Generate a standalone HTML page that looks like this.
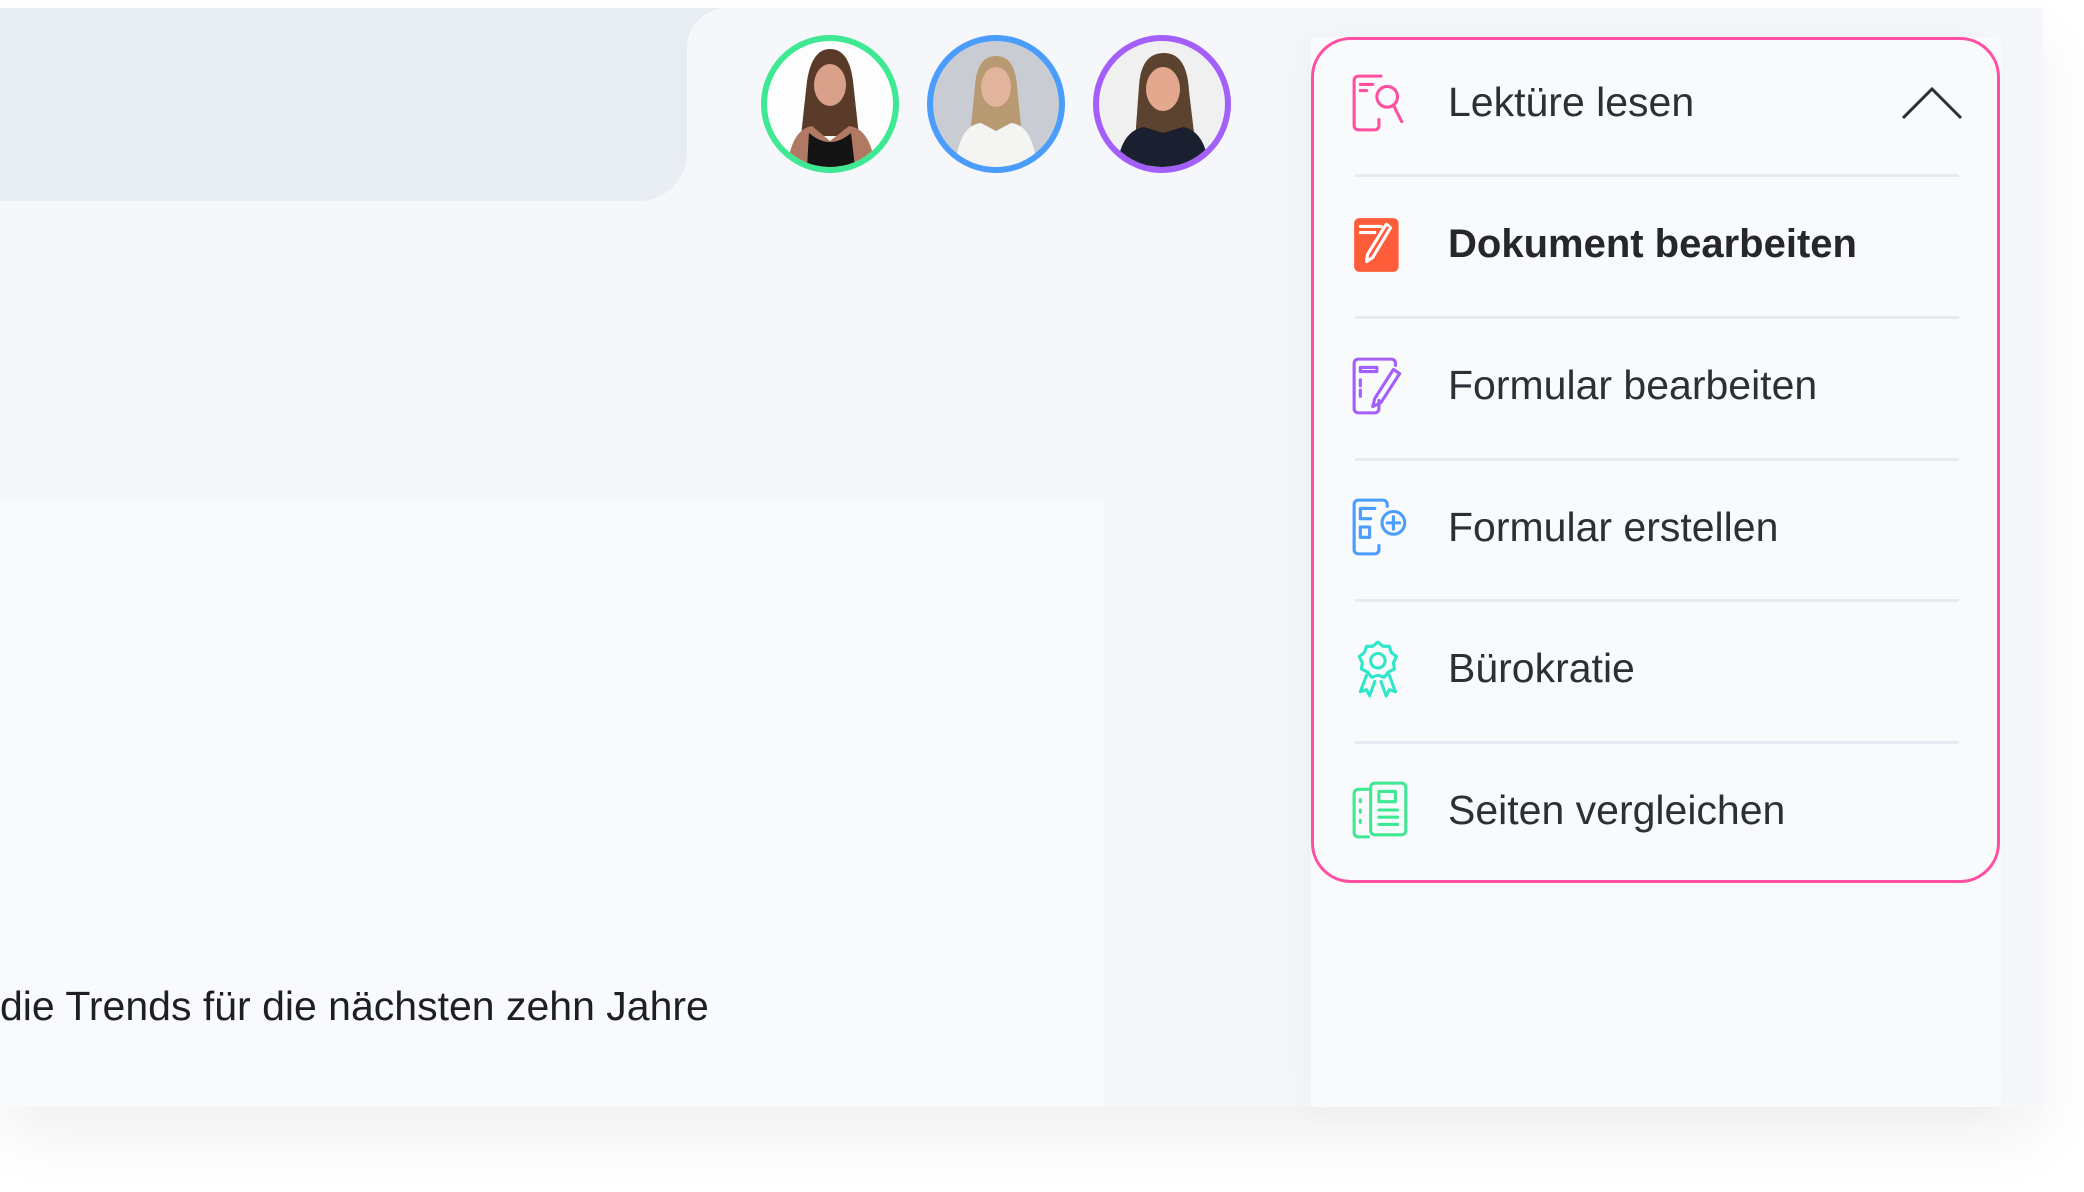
<!DOCTYPE html>
<html><head><meta charset="utf-8"><style>
html,body{margin:0;padding:0;width:2084px;height:1192px;overflow:hidden;background:#fff;font-family:"Liberation Sans",Roboto,sans-serif;}
.panel{position:absolute;left:0;top:8px;width:2043px;height:1099px;background:#f5f7fb;box-shadow:0 30px 60px rgba(0,0,0,0.06);}
.gray{position:absolute;left:0;top:8px;width:687px;height:193px;background:#e8edf4;border-bottom-right-radius:48px;}
.corner{position:absolute;left:687px;top:8px;width:40px;height:40px;background:#e8edf4;}
.corner:after{content:"";position:absolute;left:0;top:0;width:40px;height:40px;background:#f5f7fb;border-top-left-radius:40px;}
.card{position:absolute;left:0;top:500px;width:1103px;height:607px;background:#f9fafc;}
.trend{position:absolute;left:0;top:982px;font-size:41px;color:#1e1f24;white-space:nowrap;line-height:48px;}
.col{position:absolute;left:1311px;top:37px;width:690px;height:1070px;background:#f9fafc;box-shadow:-10px 0 30px rgba(0,0,0,0.03);}
.dd{position:absolute;left:1311px;top:37px;width:683px;height:840px;border:3px solid #ff4fa0;border-radius:40px;background:#f9fafc;}
.row{position:absolute;left:1448px;font-size:41px;color:#2d2f36;line-height:48px;white-space:nowrap;}
.div{position:absolute;left:1355px;width:604px;height:3px;background:#e7ebf1;}
.ic{position:absolute;left:1350px;}
.av{position:absolute;top:35px;width:126px;height:126px;border-radius:50%;border:6px solid;overflow:hidden;}
</style></head><body>
<div class="panel"></div>
<div class="gray"></div>
<div class="corner"></div>
<div class="card"></div>
<div class="trend">die Trends für die nächsten zehn Jahre</div>

<div class="av" style="left:761px;border-color:#3fe892;background:#fdfdfd">
<svg width="126" height="126" viewBox="0 0 126 126"><path d="M40 40 Q45 8 63 8 Q82 8 86 40 L92 95 L34 95Z" fill="#5a3a28"/><ellipse cx="63" cy="44" rx="16" ry="21" fill="#d9a08a"/><path d="M20 126 Q25 88 45 85 L63 100 L82 85 Q104 88 108 126Z" fill="#b07a62"/><path d="M40 126 L42 92 Q63 110 84 92 L88 126Z" fill="#141414"/></svg></div>
<div class="av" style="left:927px;border-color:#4a9dfc;background:#c9ccd2">
<svg width="126" height="126" viewBox="0 0 126 126"><path d="M42 45 Q44 15 63 15 Q82 15 84 45 L90 105 L36 105Z" fill="#b89a72"/><ellipse cx="63" cy="46" rx="15" ry="20" fill="#e3b49c"/><path d="M22 126 Q26 84 48 82 L63 90 L78 82 Q100 84 104 126Z" fill="#f4f4f2"/></svg></div>
<div class="av" style="left:1093px;border-color:#a45ffb;background:#f0f0f0">
<svg width="126" height="126" viewBox="0 0 126 126"><path d="M40 45 Q42 12 65 12 Q88 12 90 50 L96 100 L36 100Z" fill="#5c4330"/><ellipse cx="64" cy="48" rx="17" ry="22" fill="#e3a88e"/><path d="M18 126 Q22 90 45 86 L64 92 L84 86 Q106 90 110 126Z" fill="#1a2030"/></svg></div>

<div class="col"></div>
<div class="dd"></div>

<svg class="ic" style="top:72px" width="62" height="62" viewBox="0 0 60 60" fill="none" stroke="#ff4fa0" stroke-width="3" stroke-linecap="round"><path d="M30 4 H8 a4 4 0 0 0 -4 4 V52 a4 4 0 0 0 4 4 H24 a4 4 0 0 0 4 -4 V46"/><path d="M10 12 H22 M10 18 H16"/><circle cx="36" cy="24" r="10"/><path d="M42 32 L50 48"/></svg>
<svg class="ic" style="top:214px" width="62" height="62" viewBox="0 0 60 60"><rect x="4" y="4" width="43" height="52" rx="5" fill="#ff5c39"/><path d="M10 12 H30 M10 18 H24" stroke="#fff" stroke-width="3" stroke-linecap="round"/><path d="M40 12 L22 42 L16 46 L17 39 L35 10Z" fill="none" stroke="#fff" stroke-width="3" stroke-linejoin="round"/><path d="M36 6 L44 14" stroke="#ff5c39" stroke-width="3"/></svg>
<svg class="ic" style="top:355px" width="62" height="62" viewBox="0 0 60 60" fill="none" stroke="#a45ffb" stroke-width="3" stroke-linecap="round" stroke-linejoin="round"><path d="M44 10 V8 a4 4 0 0 0 -4 -4 H8 a4 4 0 0 0 -4 4 V52 a4 4 0 0 0 4 4 H24 a4 4 0 0 0 4 -4 V44"/><path d="M10 12 H26 V16 H10Z M10 24 V30 M10 34 V40"/><path d="M48 18 L30 46 L22 50 L24 42 L42 14Z"/></svg>
<svg class="ic" style="top:496px" width="62" height="62" viewBox="0 0 60 60" fill="none" stroke="#4a9dfc" stroke-width="3" stroke-linecap="round" stroke-linejoin="round"><path d="M36 10 V8 a4 4 0 0 0 -4 -4 H8 a4 4 0 0 0 -4 4 V52 a4 4 0 0 0 4 4 H24 a4 4 0 0 0 4 -4 V48"/><path d="M10 12 H24 M10 12 V22 H20"/><rect x="10" y="30" width="9" height="10"/><circle cx="42" cy="26" r="11"/><path d="M42 20 V32 M36 26 H48"/></svg>
<svg class="ic" style="top:638px" width="62" height="62" viewBox="0 0 60 60" fill="none" stroke="#2ee6c8" stroke-width="3" stroke-linecap="round" stroke-linejoin="round"><path d="M27 4 L32 8 L38 8 L40 14 L45 18 L42 24 L43 30 L37 33 L33 38 L27 36 L21 38 L17 33 L11 30 L12 24 L9 18 L14 14 L16 8 L22 8Z"/><circle cx="27" cy="22" r="7"/><path d="M16 36 L10 52 L16 50 L19 56 L24 42 M38 36 L44 52 L38 50 L35 56 L30 42"/></svg>
<svg class="ic" style="top:779px" width="62" height="62" viewBox="0 0 60 60" fill="none" stroke="#3fe892" stroke-width="3" stroke-linecap="round" stroke-linejoin="round"><path d="M18 10 H8 a4 4 0 0 0 -4 4 V52 a4 4 0 0 0 4 4 H18"/><rect x="20" y="4" width="34" height="50" rx="4"/><rect x="28" y="12" width="16" height="10"/><path d="M28 30 H46 M28 37 H46 M28 44 H46 M10 20 V22 M10 30 V32 M10 40 V42"/></svg>

<svg style="position:absolute;left:1901px;top:85px" width="62" height="36" viewBox="0 0 62 36"><path d="M2 33 L31 4 L60 33" fill="none" stroke="#2d2f36" stroke-width="3"/></svg>

<div class="row" style="top:78px">Lektüre lesen</div>
<div class="div" style="top:174px"></div>
<div class="row" style="top:220px;font-weight:bold;font-size:40px;color:#25272d">Dokument bearbeiten</div>
<div class="div" style="top:316px"></div>
<div class="row" style="top:361px">Formular bearbeiten</div>
<div class="div" style="top:458px"></div>
<div class="row" style="top:503px">Formular erstellen</div>
<div class="div" style="top:599px"></div>
<div class="row" style="top:644px">Bürokratie</div>
<div class="div" style="top:741px"></div>
<div class="row" style="top:786px">Seiten vergleichen</div>
</body></html>
